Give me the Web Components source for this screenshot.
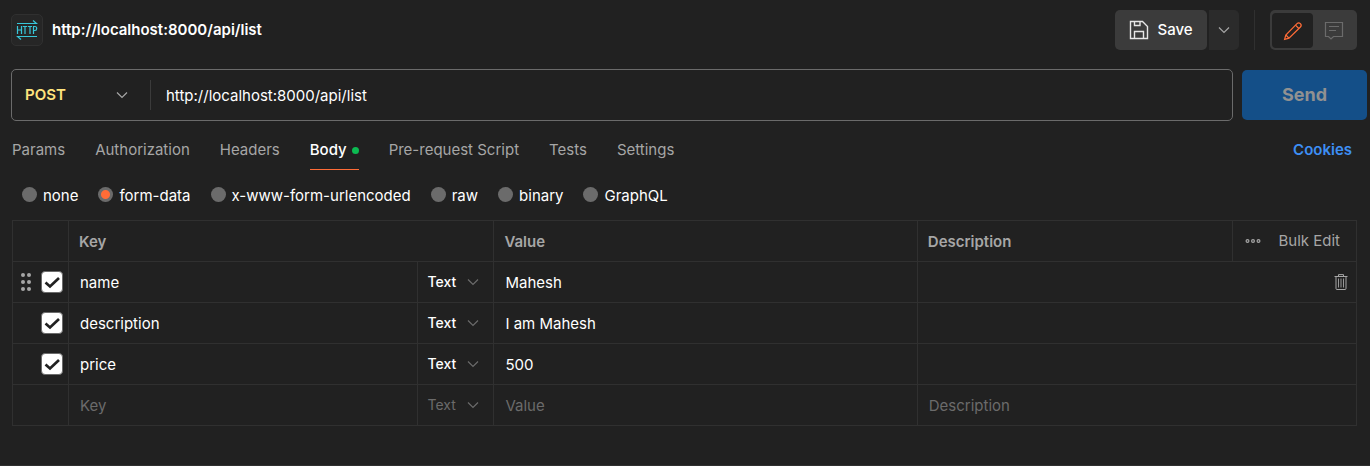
<!DOCTYPE html>
<html lang="en">
<head>
<meta charset="utf-8">
<title>http://localhost:8000/api/list</title>
<style>
  :root {
    --bg: #212121;
    --line: #303030;
    --text: #ffffff;
    --muted: #a6a6a6;
    --faint: #6b6b6b;
    --accent: #ff6c37;
    --raised: #3b3b3b;
  }
  body {
    margin: 0;
    background: var(--bg);
    color: var(--text);
    font: 400 15px/20px Inter, "Liberation Sans", sans-serif;
  }
</style>
</head>
<body>
<request-page></request-page>

<script>
const define = (name, html, setup) => {
  const template = document.createElement('template');
  template.innerHTML = `<style>
    *, ::before, ::after { box-sizing: border-box; }
    button, input, select { font: inherit; color: inherit; background: none; border: 0; margin: 0; padding: 0; }
    button, select { cursor: pointer; }
  </style>` + html;
  customElements.define(name, class extends HTMLElement {
    constructor() {
      super();
      this.attachShadow({ mode: 'open' }).append(template.content.cloneNode(true));
    }
    connectedCallback() {
      if (setup) setup(this, this.shadowRoot);
    }
  });
};

const icons = {
  chevron: [16, 16, '<path d="M3 5.5 8 10.5 13 5.5"/>'],
  save: [20, 20, '<path d="M1.5 1.5H13.5L18.5 6.5V18.5H1.5Z"/><path d="M5.5 1.5V5.5H11V1.5M5.5 18.5V11.5H14.5V18.5"/>'],
  pencil: [20, 20, '<path d="M1.6 18.4 2.8 14 14 2.6Q15.7 1 17.4 2.6 19 4.300 17.4 6L6 17.200Z"/><path d="M12.500 4.200 15.800 7.500M2.800 14 6 17.200"/>'],
  comment: [20, 20, '<path d="M1.5 1.5H18.5V15.5H9.5L7 18 4.5 15.5H1.5Z"/><path d="M5 5.5H15M5 9.500H12"/>'],
  http: [22, 22, '<path d="M1 4.5H20.5L17 1.5M21 17.5H1.5L5 20.5"/><path d="M1.5 7V15M5.5 7V15M1.5 11H5.5M6.8 7.5H11M9 7.5V15M11.8 7.5H16M14 7.5V15M17.5 15V7.5H19Q20.7 7.5 20.7 9.5 20.7 11.5 19 11.5H17.5"/>'],
  drag: [12, 20, '<g fill="currentColor" stroke="none"><circle cx="3" cy="3" r="2"/><circle cx="9" cy="3" r="2"/><circle cx="3" cy="10" r="2"/><circle cx="9" cy="10" r="2"/><circle cx="3" cy="17" r="2"/><circle cx="9" cy="17" r="2"/></g>'],
  more: [16, 16, '<circle cx="2.5" cy="8" r="1.4"/><circle cx="8" cy="8" r="1.4"/><circle cx="13.5" cy="8" r="1.4"/>'],
  trash: [14, 16, '<path d="M.5 2.5H13.5M4.500 2V.6H9.5V2M2 3V14.5Q2 15.5 3 15.5H11Q12 15.5 12 14.5V3"/><path stroke-width=".9" d="M4.5 4.5V13.5M7 4.5V13.5M9.5 4.5V13.5"/>']
};
define('ui-icon', `<style>:host { display: block; flex: none; } svg { display: block; }</style><svg aria-hidden="true"></svg>`, (host, root) => {
  const [w, h, shape] = icons[host.getAttribute('name')];
  const svg = root.querySelector('svg');
  svg.setAttribute('viewBox', `0 0 ${w} ${h}`);
  svg.setAttribute('width', w);
  svg.setAttribute('height', h);
  svg.setAttribute('fill', 'none');
  svg.setAttribute('stroke', 'currentColor');
  svg.setAttribute('stroke-width', host.getAttribute('weight') || '1.2');
  svg.innerHTML = shape;
});

define('request-header', `<style>
  :host { display: flex; align-items: center; padding: 10px 13px 0 11px; }
  .badge { display: grid; place-items: center; width: 32px; height: 32px; margin-right: 9px; border: 1px solid var(--line); border-radius: 5px; background: #262626; color: #38c6d9; }
  h1 { margin: 0; flex: 1; font: inherit; font-weight: 600; }
  .save, .caret { display: flex; align-items: center; justify-content: center; height: 40px; background: var(--raised); font-weight: 500; }
  .save { width: 92px; gap: 8px; border-radius: 5px; }
  .save ui-icon { color: #e6e6e6; }
  .caret { width: 30px; margin-left: 2px; border-radius: 0 5px 5px 0; background: #2b2b2b; color: var(--muted); }
  .rule { width: 1px; height: 40px; margin: 0 15px; background: var(--line); }
  .modes { display: flex; height: 40px; padding: 3px 3px 2px 2px; border-radius: 5px; background: var(--raised); color: var(--faint); }
  .modes button { display: grid; place-items: center; width: 41px; border-radius: 4px; }
  .modes .on { background: var(--bg); color: var(--accent); }
</style>
<span class="badge"><ui-icon name="http"></ui-icon></span>
<h1><slot></slot></h1>
<button class="save"><ui-icon name="save" weight="1.4"></ui-icon>Save</button>
<button class="caret" aria-label="More save options"><ui-icon name="chevron"></ui-icon></button>
<span class="rule"></span>
<div class="modes">
  <button class="on" aria-label="Edit"><ui-icon name="pencil"></ui-icon></button>
  <button aria-label="Comments"><ui-icon name="comment"></ui-icon></button>
</div>`);

define('url-bar', `<style>
  :host { display: flex; align-items: center; gap: 9px; padding: 19px 3px 0 11px; }
  .field { display: flex; align-items: center; flex: 1; height: 52px; border: 1px solid var(--faint); border-radius: 5px; }
  .method { display: grid; align-items: center; width: 138px; }
  .method > * { grid-area: 1 / 1; }
  select { appearance: none; width: 100%; height: 30px; padding-left: 13px; color: #ffe47e; font-weight: 600; }
  .method ui-icon { justify-self: end; margin-right: 20px; color: var(--muted); pointer-events: none; }
  input { flex: 1; min-width: 0; height: 30px; padding-left: 15px; border-left: 1px solid #3b3b3b; outline: 0; }
  .send { width: 125px; height: 50px; border-radius: 5px; background: #144f88; color: #919191; font-size: 18px; font-weight: 700; }
</style>
<div class="field">
  <div class="method">
    <select aria-label="Method"><option>POST</option><option>GET</option><option>PUT</option><option>DELETE</option></select>
    <ui-icon name="chevron"></ui-icon>
  </div>
  <input type="text" aria-label="Request URL" value="http://localhost:8000/api/list">
</div>
<button class="send">Send</button>`);

define('request-tabs', `<style>
  :host { display: flex; align-items: flex-start; gap: 30px; padding: 10px 18px 0 12px; color: var(--muted); }
  button { display: flex; align-items: center; gap: 5px; height: 39px; padding: 0; border-bottom: 1px solid transparent; }
  .on { color: var(--text); font-weight: 500; border-color: var(--accent); }
  .on::after { content: ""; width: 7px; height: 7px; border-radius: 50%; background: #0cbb52; }
  a { margin-left: auto; line-height: 38px; color: #3d8ff5; font-weight: 600; text-decoration: none; }
</style>
<button>Params</button><button>Authorization</button><button>Headers</button><button class="on">Body</button><button>Pre-request Script</button><button>Tests</button><button>Settings</button>
<a href="#cookies">Cookies</a>`);

define('body-modes', `<style>
  :host { display: flex; gap: 20px; padding: 16px 22px 14px; }
  label { display: flex; align-items: center; gap: 6px; }
  input { appearance: none; width: 15px; height: 15px; margin-bottom: 3px; border-radius: 50%; background: var(--faint); }
  input:checked { background: radial-gradient(circle, var(--accent) 4px, var(--faint) 5px); }
</style>
<label><input type="radio" name="mode">none</label>
<label><input type="radio" name="mode" checked>form-data</label>
<label><input type="radio" name="mode">x-www-form-urlencoded</label>
<label><input type="radio" name="mode">raw</label>
<label><input type="radio" name="mode">binary</label>
<label><input type="radio" name="mode">GraphQL</label>`);

define('row-check', `<style>
  :host { display: grid; }
  input, svg { grid-area: 1 / 1; width: 22px; height: 22px; }
  input { appearance: none; border: 1px solid var(--faint); border-radius: 4px; }
  input:checked { background: #fff; }
  svg { pointer-events: none; visibility: hidden; }
  input:checked + svg { visibility: visible; }
</style>
<input type="checkbox" checked aria-label="Include field">
<svg viewBox="0 0 22 22" fill="none" stroke="#212121" stroke-width="2.7" aria-hidden="true"><path d="M4.500 11.500 9 15.500 18 7"/></svg>`);

define('type-select', `<style>
  :host { display: grid; align-items: center; font-size: 14px; font-weight: 500; }
  :host([blank]) { color: var(--faint); font-weight: 400; }
  select, ui-icon { grid-area: 1 / 1; }
  select { appearance: none; width: 100%; height: 40px; padding-left: 9px; }
  ui-icon { justify-self: end; margin-right: 12px; color: var(--faint); pointer-events: none; }
</style>
<select aria-label="Field type"><option>Text</option><option>File</option></select>
<ui-icon name="chevron"></ui-icon>`);

const row = (key, value, first) => `<tr>
  <td><div class="pick">${first ? '<ui-icon name="drag"></ui-icon>' : ''}<row-check></row-check></div></td>
  <td><input type="text" aria-label="Key" value="${key}"></td>
  <td><type-select></type-select></td>
  <td><input type="text" aria-label="Value" value="${value}"></td>
  <td colspan="2"><div class="last"><input type="text" aria-label="Description">${first ? '<button class="trash" aria-label="Delete row"><ui-icon name="trash" weight="1"></ui-icon></button>' : ''}</div></td>
</tr>`;

define('form-table', `<style>
  :host { display: block; padding: 0 13px 0 12px; }
  table { width: 100%; border-collapse: collapse; table-layout: fixed; }
  .c-pick { width: 56px; } .c-key { width: 26%; } .c-type { width: 76px; } .c-value { width: 31.5%; } .c-act { width: 124px; }
  th, td { height: 41px; padding: 0; border: 1px solid var(--line); text-align: left; }
  th { padding: 2px 0 0 10px; color: var(--muted); font-weight: 600; }
  input { display: block; width: 100%; height: 40px; padding-left: 11px; outline: 0; }
  input::placeholder { color: var(--faint); opacity: 1; }
  .pick { display: flex; align-items: center; justify-content: flex-end; gap: 9px; padding-right: 5px; color: var(--muted); }
  .last { display: flex; align-items: center; }
  .trash { padding-right: 8px; color: var(--muted); }
  .actions { display: flex; align-items: center; justify-content: space-between; padding: 0 16px 0 12px; color: var(--muted); }
  .actions button { display: block; }
</style>
<table>
  <colgroup><col class="c-pick"><col class="c-key"><col class="c-type"><col class="c-value"><col><col class="c-act"></colgroup>
  <thead><tr>
    <th></th><th colspan="2">Key</th><th>Value</th><th>Description</th>
    <td><div class="actions"><button aria-label="Columns"><ui-icon name="more"></ui-icon></button><button>Bulk Edit</button></div></td>
  </tr></thead>
  <tbody>
    ${row('name', 'Mahesh', true)}
    ${row('description', 'I am Mahesh')}
    ${row('price', '500')}
    <tr>
      <td></td>
      <td><input type="text" aria-label="New key" placeholder="Key"></td>
      <td><type-select blank></type-select></td>
      <td><input type="text" aria-label="New value" placeholder="Value"></td>
      <td colspan="2"><input type="text" aria-label="New description" placeholder="Description"></td>
    </tr>
  </tbody>
</table>`);

define('request-page', `<style>
  :host { display: flex; flex-direction: column; min-height: 100vh; box-sizing: border-box; border-bottom: 1px solid var(--line); }
</style>
<request-header>http://localhost:8000/api/list</request-header>
<url-bar></url-bar>
<request-tabs></request-tabs>
<body-modes></body-modes>
<form-table></form-table>`);
</script>
</body>
</html>
